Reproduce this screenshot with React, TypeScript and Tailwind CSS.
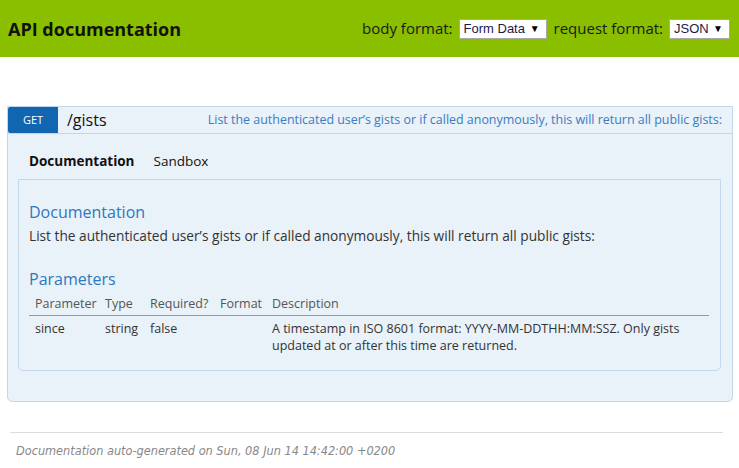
import React from "react";

const sans = { fontFamily: '"Open Sans", "Noto Sans", sans-serif' };

function FakeSelect({ label, width }: { label: string; width: string }) {
  return (
    <div
      className={`flex items-center justify-between bg-white border border-[#a9a9a9] h-[20px] pl-[4px] pr-[6px] text-[13px] text-[#1a1a4a] ${width}`}
      style={{ fontFamily: '"Liberation Sans", Arial, sans-serif' }}
    >
      <span>{label}</span>
      <span className="text-[10px] text-black">▼</span>
    </div>
  );
}

export default function App() {
  return (
    <div className="w-[739px] h-[468px] bg-white overflow-hidden" style={sans}>
      <header className="h-[57px] bg-[#8abf00] flex items-center justify-between pl-[8px] pr-[9px]">
        <h1 className="text-[18px] font-bold text-[#111] pt-[1px]">API documentation</h1>
        <div className="flex items-center text-[15px] text-[#1a1a1a] gap-[6px]">
          <span>body format:</span>
          <FakeSelect label="Form Data" width="w-[88px]" />
          <span className="ml-[1px]">request format:</span>
          <FakeSelect label="JSON" width="w-[61px]" />
        </div>
      </header>

      <div className="mt-[49px] mx-[7px] w-[726px] border border-[#c3d7ea] bg-[#e9f1f9] rounded-b-[5px]">
        <div className="flex items-center h-[27px] border-b border-[#c3d7ea]">
          <div className="w-[50px] h-[26px] bg-[#1166b1] text-white text-[11px] flex items-center justify-center rounded-tl-[2px] rounded-bl-[2px] self-end">
            GET
          </div>
          <div className="ml-[9px] text-[16px] text-[#111]">/gists</div>
          <div className="ml-auto mr-[10px] text-[12.45px] text-[#3a7cc3]">
            List the authenticated user’s gists or if called anonymously, this will return all public gists:
          </div>
        </div>

        <div className="flex h-[45px] items-center pl-[21px] pt-[9px] text-[13.5px] text-[#111]">
          <span className="font-bold">Documentation</span>
          <span className="ml-[19px]">Sandbox</span>
        </div>

        <div className="ml-[10px] mr-[11px] mb-[30px] border border-[#c3d7ea] rounded-b-[5px] pt-[22px] pb-[16px] px-[10px]">
          <h2 className="text-[16px] text-[#2e78c0] leading-[20px]">Documentation</h2>
          <p className="text-[13.7px] text-[#333] mt-[5px] leading-[18px]">
            List the authenticated user’s gists or if called anonymously, this will return all public gists:
          </p>
          <h2 className="text-[16px] text-[#2e78c0] leading-[20px] mt-[24px]">Parameters</h2>
          <table className="mt-[6px] w-[680px] text-[12.5px] border-collapse table-fixed">
            <thead>
              <tr className="text-[#555] border-b border-[#999]">
                <th className="font-normal text-left w-[70px] pl-[6px] pb-[1px]">Parameter</th>
                <th className="font-normal text-left w-[45px] pl-[6px] pb-[1px]">Type</th>
                <th className="font-normal text-left w-[70px] pl-[6px] pb-[1px]">Required?</th>
                <th className="font-normal text-left w-[52px] pl-[6px] pb-[1px]">Format</th>
                <th className="font-normal text-left pl-[6px] pb-[1px]">Description</th>
              </tr>
            </thead>
            <tbody>
              <tr className="text-[#333] align-top">
                <td className="pl-[6px] pt-[4px]">since</td>
                <td className="pl-[6px] pt-[4px]">string</td>
                <td className="pl-[6px] pt-[4px]">false</td>
                <td className="pl-[6px] pt-[4px]"></td>
                <td className="pl-[6px] pt-[4px] leading-[17px]">
                  A timestamp in ISO 8601 format: YYYY-MM-DDTHH:MM:SSZ. Only gists updated at or after this time are returned.
                </td>
              </tr>
            </tbody>
          </table>
        </div>
      </div>

      <div className="mx-[10px] mt-[30px] w-[713px] border-t border-[#ddd]" />
      <p
        className="ml-[16px] mt-[9px] text-[12.6px] italic text-[#888]"
        style={{ fontFamily: '"DejaVu Sans Condensed", "DejaVu Sans", sans-serif', fontStretch: "condensed" }}
      >
        Documentation auto-generated on Sun, 08 Jun 14 14:42:00 +0200
      </p>
    </div>
  );
}
